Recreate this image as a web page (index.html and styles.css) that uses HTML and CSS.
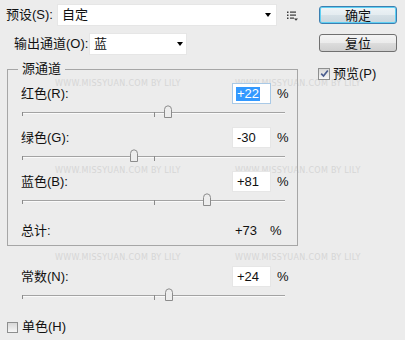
FILE: index.html
```html
<!DOCTYPE html>
<html lang="zh-CN">
<head>
<meta charset="utf-8">
<title>通道混合器</title>
<link rel="stylesheet" href="styles.css">
</head>
<body>
<div class="watermarks" aria-hidden="true">
  <span class="wm" style="left:55px;top:79px">WWW.MISSYUAN.COM BY LILY</span>
  <span class="wm" style="left:235px;top:79px">WWW.MISSYUAN.COM BY LILY</span>
  <span class="wm" style="left:55px;top:166px">WWW.MISSYUAN.COM BY LILY</span>
  <span class="wm" style="left:235px;top:166px">WWW.MISSYUAN.COM BY LILY</span>
  <span class="wm" style="left:55px;top:253px">WWW.MISSYUAN.COM BY LILY</span>
  <span class="wm" style="left:235px;top:253px">WWW.MISSYUAN.COM BY LILY</span>
</div>
<div class="dialog">
  <div class="main">
    <div class="row row-preset">
      <span class="lbl lbl-preset">预设(S):</span>
      <div class="select select-preset"><span class="select-text">自定</span><i class="arrow"></i></div>
      <svg class="menu-icon" width="11" height="10" viewBox="0 0 11 10">
        <rect x="0" y="0.5" width="1.5" height="1.5" fill="#3a3a3a"/>
        <rect x="3" y="0.5" width="6" height="1.2" fill="#3a3a3a"/>
        <rect x="0" y="3.5" width="1.5" height="1.5" fill="#3a3a3a"/>
        <rect x="3" y="3.5" width="6" height="1.2" fill="#3a3a3a"/>
        <rect x="0" y="6.5" width="1.5" height="1.5" fill="#3a3a3a"/>
        <rect x="3" y="6.5" width="4" height="1.2" fill="#3a3a3a"/>
        <polygon points="7,7.5 11,7.5 9,9.8" fill="#3a3a3a"/>
      </svg>
    </div>
    <div class="row row-output">
      <span class="lbl lbl-output">输出通道(O):</span>
      <div class="select select-output"><span class="select-text">蓝</span><i class="arrow arrow-output"></i></div>
    </div>

    <fieldset class="group">
      <legend class="legend">源通道</legend>

      <div class="chan">
        <div class="chan-row">
          <span class="lbl">红色(R):</span>
          <span class="num num-focus"><span class="selected">+22</span></span>
          <span class="pct">%</span>
        </div>
        <div class="slider">
          <div class="track"></div>
          <i class="tick tick-start"></i><i class="tick tick-mid"></i>
          <svg class="thumb" style="left:141px" width="10" height="13" viewBox="0 0 10 13"><path d="M1.5 12.5 V4.5 Q1.5 1 5 0.8 Q8.5 1 8.5 4.5 V12.5 Z"/></svg>
        </div>
      </div>

      <div class="chan">
        <div class="chan-row">
          <span class="lbl">绿色(G):</span>
          <span class="num">-30</span>
          <span class="pct">%</span>
        </div>
        <div class="slider">
          <div class="track"></div>
          <i class="tick tick-start"></i><i class="tick tick-mid"></i>
          <svg class="thumb" style="left:107px" width="10" height="13" viewBox="0 0 10 13"><path d="M1.5 12.5 V4.5 Q1.5 1 5 0.8 Q8.5 1 8.5 4.5 V12.5 Z"/></svg>
        </div>
      </div>

      <div class="chan">
        <div class="chan-row">
          <span class="lbl">蓝色(B):</span>
          <span class="num">+81</span>
          <span class="pct">%</span>
        </div>
        <div class="slider">
          <div class="track"></div>
          <i class="tick tick-start"></i><i class="tick tick-mid"></i>
          <svg class="thumb" style="left:180px" width="10" height="13" viewBox="0 0 10 13"><path d="M1.5 12.5 V4.5 Q1.5 1 5 0.8 Q8.5 1 8.5 4.5 V12.5 Z"/></svg>
        </div>
      </div>

      <div class="total-row">
        <span class="lbl">总计:</span>
        <span class="total-val">+73</span>
        <span class="total-pct">%</span>
      </div>
    </fieldset>

    <div class="const">
      <div class="chan-row">
        <span class="lbl">常数(N):</span>
        <span class="num">+24</span>
        <span class="pct">%</span>
      </div>
      <div class="slider">
        <div class="track"></div>
        <i class="tick tick-start"></i><i class="tick tick-mid"></i>
        <svg class="thumb" style="left:142px" width="10" height="13" viewBox="0 0 10 13"><path d="M1.5 12.5 V4.5 Q1.5 1 5 0.8 Q8.5 1 8.5 4.5 V12.5 Z"/></svg>
      </div>
    </div>

    <div class="check check-mono"><span class="box"></span><span>单色(H)</span></div>
  </div>

  <div class="side">
    <button class="btn btn-default" type="button">确定</button>
    <button class="btn btn-reset" type="button">复位</button>
    <div class="check check-preview">
      <span class="box box-checked">
        <svg width="9" height="9" viewBox="0 0 9 9"><path d="M1.2 4.6 L3.5 7 L7.8 1.5" fill="none" stroke="#4a5d8f" stroke-width="1.7"/></svg>
      </span>
      <span>预览(P)</span>
    </div>
  </div>
</div>
</body>
</html>
```

FILE: styles.css
```css
html, body {
  margin: 0;
  padding: 0;
}

body {
  width: 405px;
  height: 340px;
  overflow: hidden;
  position: relative;
  background: #ececec;
  color: #111;
  font-family: "Liberation Sans", "Noto Sans CJK SC", sans-serif;
  font-size: 13px;
  line-height: 16px;
}

.watermarks {
  position: absolute;
  inset: 0;
  pointer-events: none;
}

.wm {
  position: absolute;
  font-family: "DejaVu Sans", sans-serif;
  font-size: 8px;
  line-height: 10px;
  letter-spacing: 0.3px;
  color: #d6d6d6;
  white-space: nowrap;
}

.dialog {
  position: relative;
  display: flex;
}

.main {
  width: 298px;
}

.row {
  display: flex;
  align-items: center;
  height: 22px;
}

.row-preset {
  margin-top: 4px;
  padding-left: 6px;
}

.lbl-preset {
  width: 51px;
}

.select {
  height: 22px;
  box-sizing: border-box;
  background: #fff;
  border: 1px solid #e6e6e6;
  display: flex;
  align-items: center;
}

.select-text {
  flex: 1;
}

.select-preset {
  width: 220px;
  padding-left: 4px;
}

.arrow {
  width: 0;
  height: 0;
  border-left: 3.5px solid transparent;
  border-right: 3.5px solid transparent;
  border-top: 4px solid #000;
  margin-right: 5px;
}

.arrow-output {
  margin-right: 3px;
}

.menu-icon {
  margin-left: 10px;
  margin-top: 1px;
}

.row-output {
  margin-top: 7px;
  padding-left: 14px;
}

.lbl-output {
  width: 75px;
}

.select-output {
  width: 98px;
  padding-left: 4px;
}

.group {
  margin: 6px 0 0 7px;
  padding: 6px 10px 4px 13px;
  width: 291px;
  box-sizing: border-box;
  min-width: 0;
  border: 1px solid #a6a6a6;
}

.legend {
  padding: 0 4px;
  margin-left: -3px;
  height: 16px;
  line-height: 16px;
}

.chan-row {
  display: flex;
  align-items: center;
  height: 21px;
}

.chan-row .lbl {
  flex: 1;
}

.num {
  width: 39px;
  height: 21px;
  box-sizing: border-box;
  background: #fff;
  border: 1px solid #e6e6e6;
  padding-left: 4px;
  display: flex;
  align-items: center;
}

.num-focus {
  border-color: #a9c9e6;
}

.selected {
  background: #3399ff;
  color: #fff;
  padding: 0 1px;
  margin-left: -1px;
  line-height: 14px;
}

.pct {
  width: 10px;
  margin-left: 6px;
}

.slider {
  position: relative;
  width: 263px;
  height: 23px;
  box-sizing: border-box;
  padding-top: 8px;
  margin-left: 1px;
}

.track {
  height: 0;
  border-top: 1px solid #a3a3a3;
  border-bottom: 1px solid #fafafa;
}

.tick {
  position: absolute;
  width: 1px;
  background: #8a8a8a;
}

.tick-start {
  left: 0;
  top: 8px;
  height: 4px;
}

.tick-mid {
  left: 132px;
  top: 8px;
  height: 5px;
}

.thumb {
  position: absolute;
  top: 1px;
}

.thumb path {
  fill: #ededed;
  stroke: #8c8c8c;
  stroke-width: 1;
}

.total-row {
  display: flex;
  align-items: center;
  height: 20px;
  margin-top: 6px;
}

.total-row .lbl {
  flex: 1;
}

.total-val {
  width: 35px;
}

.total-pct {
  width: 17px;
}

.const {
  width: 266px;
  padding-left: 21px;
  margin-top: 20px;
}

.check {
  display: flex;
  align-items: center;
}

.box {
  width: 11px;
  height: 11px;
  box-sizing: border-box;
  border: 1px solid #8e8f8f;
  background: linear-gradient(#d8d8d8, #f7f7f7);
  margin-right: 4px;
  display: flex;
  align-items: center;
  justify-content: center;
}

.check-mono {
  height: 20px;
  margin-top: 7px;
  margin-left: 7px;
}

.side {
  margin-left: 21px;
  width: 78px;
  display: flex;
  flex-direction: column;
}

.btn {
  height: 18px;
  box-sizing: border-box;
  padding: 0;
  margin: 0;
  border: 1px solid #707070;
  border-radius: 3px;
  font-family: "Liberation Sans", "Noto Sans CJK SC", sans-serif;
  font-size: 13px;
  line-height: 15px;
  color: #111;
  background: linear-gradient(#f4f4f4 0%, #ebebeb 48%, #dcdcdc 52%, #cfcfcf 100%);
}

.btn-default {
  margin-top: 6px;
  border-color: #3c7fb1;
  box-shadow: inset 0 0 0 1px #5fd0f3;
  background: linear-gradient(#eef4f7 0%, #e4ecf0 48%, #d5e0e6 52%, #c9d6dd 100%);
}

.btn-reset {
  margin-top: 10px;
}

.check-preview {
  margin-top: 15px;
  margin-left: -1px;
  height: 13px;
}

.box-checked {
  width: 12px;
  height: 12px;
  margin-right: 3px;
}
```
